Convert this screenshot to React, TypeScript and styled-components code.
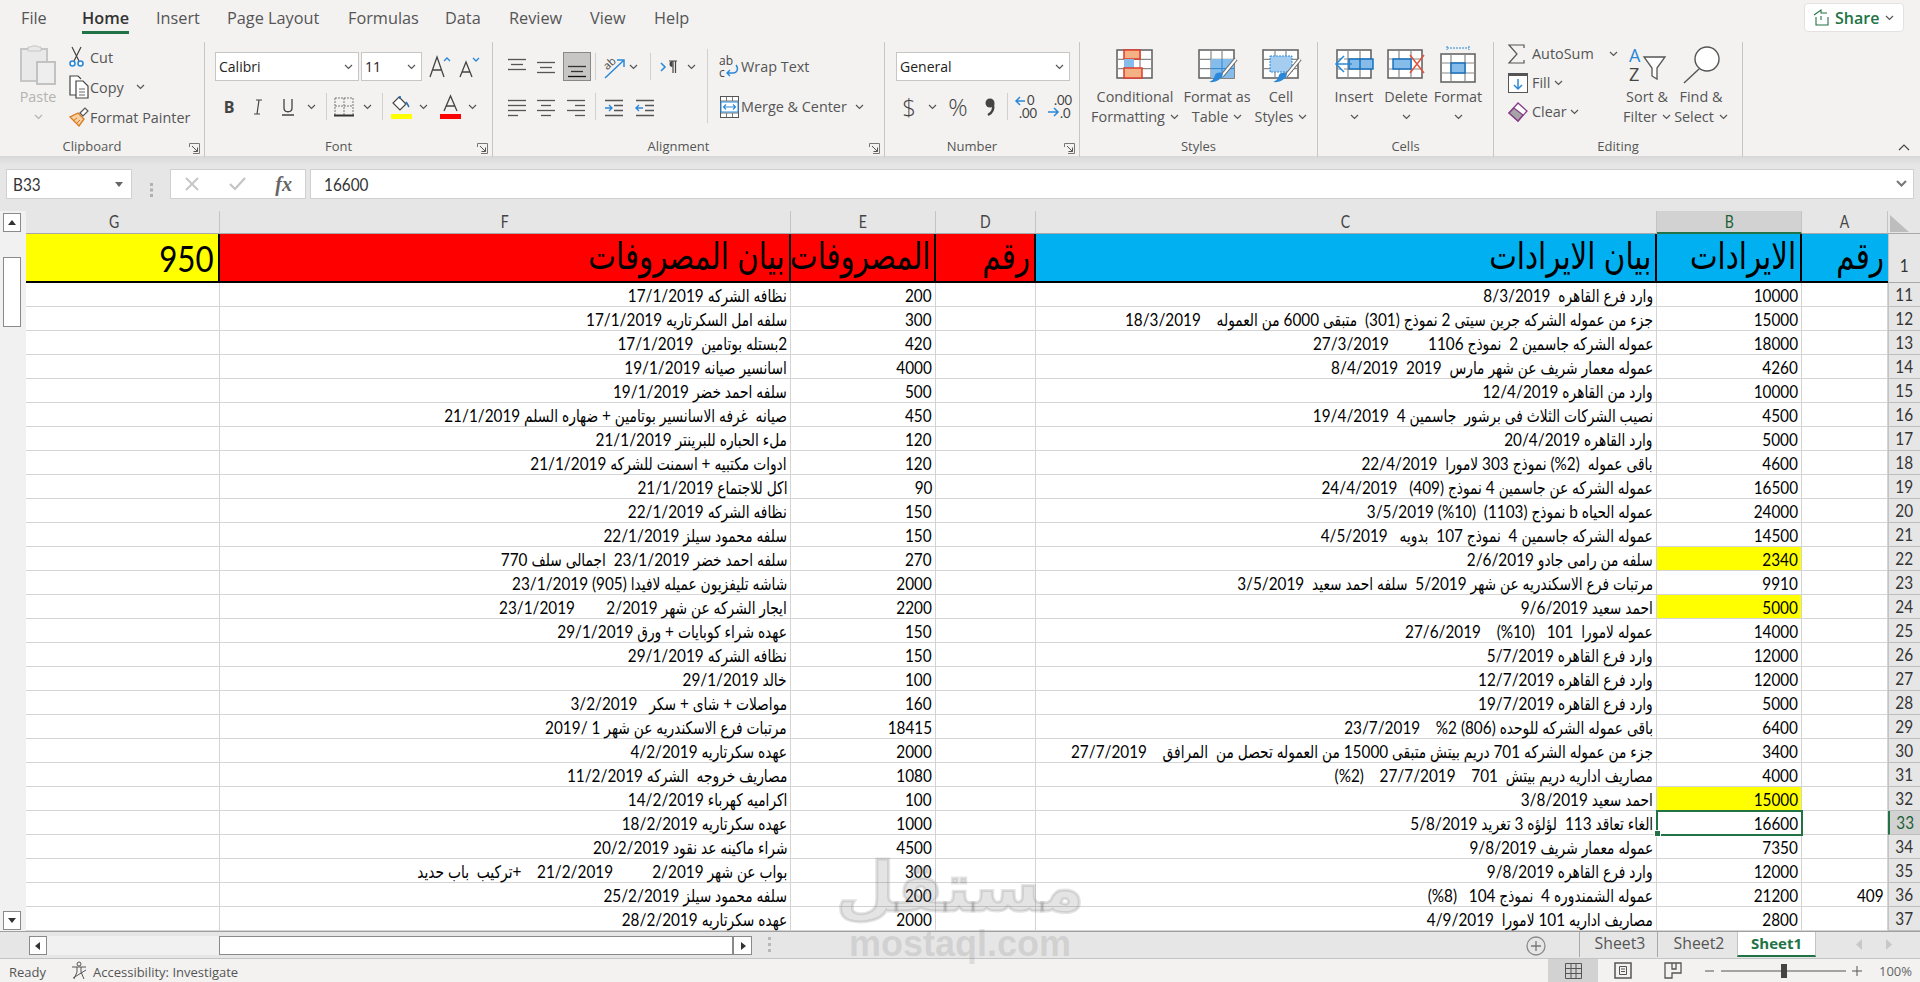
import React from 'react';
import styled, { createGlobalStyle } from 'styled-components';

const GlobalStyle = createGlobalStyle`
  html, body { margin: 0; padding: 0; background: #e6e6e6; }
  body { font-family: "Open Sans", sans-serif; overflow: hidden; }
  svg { overflow: visible; }
`;

const UI = '"Open Sans", sans-serif';
const SHEET = 'Lato, "DejaVu Sans Condensed", "DejaVu Sans", sans-serif';
const GREEN = '#217346';

const Page = styled.div`
  width: 1920px;
  height: 982px;
  display: flex;
  flex-direction: column;
  position: relative;
  overflow: hidden;
  color: #444;
`;

/* ---------- tabs ---------- */
const TabBar = styled.div`
  height: 36px;
  background: #f3f2f1;
  display: flex;
  align-items: flex-start;
  justify-content: space-between;
  padding: 0 16px 0 21px;
`;
const TabList = styled.div`
  display: flex;
`;
const Tab = styled.div<{ $w: number; $active?: boolean }>`
  width: ${p => p.$w}px;
  height: 34px;
  line-height: 36px;
  font-size: 16.3px;
  font-weight: ${p => (p.$active ? 600 : 400)};
  color: ${p => (p.$active ? '#333' : '#555')};
  white-space: nowrap;
  span {
    display: inline-block;
    height: 34px;
    border-bottom: ${p => (p.$active ? `3px solid ${GREEN}` : 'none')};
    box-sizing: border-box;
  }
`;
const ShareBtn = styled.div`
  margin-top: 3px;
  width: 100px;
  height: 29px;
  box-sizing: border-box;
  background: #fff;
  border: 1px solid #e4e2e0;
  border-radius: 4px;
  display: flex;
  align-items: center;
  padding-left: 8px;
  gap: 6px;
  color: ${GREEN};
  font-weight: 600;
  font-size: 16px;
`;

/* ---------- ribbon ---------- */
const Ribbon = styled.div`
  height: 120px;
  background: #f3f2f1;
  display: flex;
  position: relative;
  font-size: 14.4px;
`;
const Group = styled.div<{ $w: number }>`
  width: ${p => p.$w}px;
  height: 115px;
  margin-top: 6px;
  box-sizing: border-box;
  border-right: 1px solid #c8c6c4;
  display: flex;
  flex-direction: column;
  position: relative;
`;
const GroupBody = styled.div<{ $pl: number; $col?: boolean }>`
  flex: 1;
  display: flex;
  flex-direction: ${p => (p.$col ? 'column' : 'row')};
  padding-left: ${p => p.$pl}px;
  min-height: 0;
`;
const GroupLabel = styled.div<{ $launcher?: boolean }>`
  height: 20px;
  line-height: 18px;
  text-align: center;
  font-size: 13px;
  color: #555;
  padding-right: ${p => (p.$launcher ? 20 : 0)}px;
`;
const Launcher = styled.svg`
  position: absolute;
  right: 4px;
  bottom: 3px;
`;
const ToolRow = styled.div<{ $mt: number }>`
  display: flex;
  align-items: center;
  height: 29px;
  margin-top: ${p => p.$mt}px;
`;
const Tool = styled.div<{ $w: number; $ml?: number; $on?: boolean }>`
  width: ${p => p.$w}px;
  height: 29px;
  margin-left: ${p => p.$ml ?? 0}px;
  display: flex;
  align-items: center;
  justify-content: center;
  flex: none;
  box-sizing: border-box;
  ${p => (p.$on ? 'background:#c8c6c4;border:1px solid #8a8886;' : '')}
`;
const ThinSep = styled.div<{ $ml: number; $h?: number }>`
  width: 1px;
  height: ${p => p.$h ?? 27}px;
  margin-left: ${p => p.$ml}px;
  background: #d2d0ce;
  flex: none;
`;
const SelectBox = styled.div<{ $w: number; $ml?: number }>`
  width: ${p => p.$w}px;
  height: 29px;
  margin-left: ${p => p.$ml ?? 0}px;
  box-sizing: border-box;
  background: #fff;
  border: 1px solid #c8c6c4;
  display: flex;
  align-items: center;
  justify-content: space-between;
  padding: 0 5px 0 3px;
  font-size: 14px;
  color: #222;
  flex: none;
`;
const SmallCol = styled.div<{ $ml?: number; $w?: number; $mt?: number }>`
  margin-left: ${p => p.$ml ?? 0}px;
  margin-top: ${p => p.$mt ?? 0}px;
  width: ${p => (p.$w ? `${p.$w}px` : 'auto')};
  flex: none;
  display: flex;
  flex-direction: column;
`;
const SmallRow = styled.div<{ $h?: number }>`
  height: ${p => p.$h ?? 30}px;
  display: flex;
  align-items: center;
  white-space: nowrap;
  color: #555;
`;
const SmallIcon = styled.div<{ $w: number }>`
  width: ${p => p.$w}px;
  flex: none;
  display: flex;
  justify-content: flex-start;
`;
const BigBtn = styled.div<{ $w: number; $dim?: boolean }>`
  width: ${p => p.$w}px;
  flex: none;
  display: flex;
  flex-direction: column;
  align-items: center;
  color: ${p => (p.$dim ? '#b4b2b0' : '#555')};
`;
const BigIcon = styled.div`
  height: 45px;
  display: flex;
  align-items: center;
  justify-content: center;
`;
const BigLine = styled.div`
  height: 20px;
  line-height: 20px;
  display: flex;
  align-items: center;
  gap: 5px;
  white-space: nowrap;
`;
const TallSep = styled.div`
  width: 1px;
  height: 74px;
  margin: 7px 0 0 0;
  background: #d2d0ce;
  flex: none;
`;
const LetterB = styled.span`
  font: 700 16px "Open Sans", sans-serif;
  color: #444;
`;
const GlyphBig = styled.span<{ $s: number }>`
  font-family: ${UI};
  font-size: ${p => p.$s}px;
  font-weight: 300;
  color: #444;
  line-height: 1;
`;
const Collapse = styled.svg`
  position: absolute;
  right: 10px;
  bottom: 5px;
`;

/* ---------- formula bar ---------- */
const FormulaArea = styled.div`
  height: 55px;
  box-sizing: border-box;
  padding: 13px 6px 0;
  background: linear-gradient(#d8d8d8 0, #e6e6e6 9px);
  display: flex;
`;
const NameBox = styled.div`
  width: 126px;
  height: 30px;
  box-sizing: border-box;
  background: #fff;
  border: 1px solid #d0d0d0;
  display: flex;
  align-items: center;
  justify-content: space-between;
  padding: 0 8px 0 6px;
  color: #333;
`;
const BarText = styled.span`
  display: inline-block;
  font-family: ${SHEET};
  font-size: 17.6px;
  transform: scaleX(0.87);
  transform-origin: left center;
`;
const Dots = styled.div`
  width: 38px;
  display: flex;
  align-items: center;
  justify-content: center;
`;
const FxBox = styled.div`
  width: 136px;
  height: 30px;
  box-sizing: border-box;
  background: #fff;
  border: 1px solid #d0d0d0;
  display: flex;
  align-items: center;
  justify-content: space-between;
  padding: 0 13px 0 14px;
`;
const FxLabel = styled.span`
  font: italic 700 20px "Liberation Serif", serif;
  color: #666;
`;
const FormulaInput = styled.div`
  flex: 1;
  height: 30px;
  margin-left: 4px;
  box-sizing: border-box;
  background: #fff;
  border: 1px solid #d0d0d0;
  display: flex;
  align-items: center;
  justify-content: space-between;
  padding: 0 6px 0 13px;
  color: #333;
`;

/* ---------- sheet ---------- */
const SheetArea = styled.div`
  display: flex;
  height: 720px;
  background: #e6e6e6;
`;
const VScroll = styled.div`
  width: 26px;
  box-sizing: border-box;
  background: #f1f1f1;
  padding: 2px 5px 1px 3px;
  display: flex;
  flex-direction: column;
`;
const ScrollBtn = styled.div<{ $w?: number; $h?: number; $ml?: number }>`
  width: ${p => (p.$w ? `${p.$w}px` : '100%')};
  height: ${p => p.$h ?? 19}px;
  margin-left: ${p => p.$ml ?? 0}px;
  box-sizing: border-box;
  background: #fff;
  border: 1px solid #8a8a8a;
  display: flex;
  align-items: center;
  justify-content: center;
  flex: none;
`;
const VThumb = styled.div`
  height: 70px;
  margin-top: 25px;
  box-sizing: border-box;
  background: #fff;
  border: 1px solid #8a8a8a;
`;
const VSpring = styled.div`
  flex: 1;
`;
const Grid = styled.div`
  width: 1894px;
  display: grid;
  grid-template-columns: 194px 571px 145px 100px 621px 145px 86px 32px;
  grid-template-rows: 23px 49px repeat(27, 24px);
  background: #fff;
`;
const ColHead = styled.div<{ $on?: boolean; $shift?: number }>`
  box-sizing: border-box;
  background: ${p => (p.$on ? '#d2d2d2' : '#e6e6e6')};
  border-right: 1px solid #c4c4c4;
  border-bottom: ${p => (p.$on ? `2px solid ${GREEN}` : '1px solid #a8a8a8')};
  display: flex;
  align-items: center;
  justify-content: center;
  padding-right: ${p => p.$shift ?? 0}px;
  font-family: ${SHEET};
  font-size: 16.5px;
  color: ${p => (p.$on ? '#1d5e38' : '#444')};
  span {
    display: inline-block;
    transform: scaleX(0.85);
  }
`;
const Corner = styled.div`
  background: #e6e6e6;
  border-bottom: 1px solid #a8a8a8;
  box-sizing: border-box;
  padding: 4px 0 0 2px;
`;
const RowHead = styled.div<{ $on?: boolean }>`
  box-sizing: border-box;
  background: ${p => (p.$on ? '#d2d2d2' : '#e6e6e6')};
  border-bottom: 1px solid #bdbdbd;
  border-left: ${p => (p.$on ? `2px solid ${GREEN}` : '1px solid #c4c4c4')};
  display: flex;
  align-items: center;
  justify-content: center;
  color: ${p => (p.$on ? '#1d5e38' : '#333')};
  font-family: ${SHEET};
  font-size: 17.6px;
  span {
    display: inline-block;
    transform: scaleX(0.87);
  }
`;
const TitleRowHead = styled(RowHead)`
  align-items: flex-end;
  padding-bottom: 6px;
  border-bottom: 1px solid #a8a8a8;
`;
const Cell = styled.div<{ $bg?: string; $sel?: boolean }>`
  box-sizing: border-box;
  background: ${p => p.$bg ?? '#fff'};
  border-right: 1px solid #d4d4d4;
  border-bottom: 1px solid #d4d4d4;
  display: flex;
  align-items: flex-end;
  justify-content: flex-end;
  padding-right: 3px;
  font-family: ${SHEET};
  font-size: 17.6px;
  line-height: 21px;
  color: #000;
  white-space: pre;
  position: relative;
  ${p =>
    p.$sel
      ? `outline: 2px solid ${GREEN}; outline-offset: -1px; z-index: 2;
         &::after { content: ''; position: absolute; left: -3px; bottom: -3px; width: 5px; height: 5px; background: ${GREEN}; border: 1px solid #fff; }`
      : ''}
`;
const TitleCell = styled.div<{ $bg: string; $noline?: boolean }>`
  box-sizing: border-box;
  background: ${p => p.$bg};
  border-right: ${p => (p.$noline ? 'none' : '2px solid #000')};
  border-bottom: 2px solid #000;
  display: flex;
  align-items: center;
  justify-content: flex-end;
  padding-right: 4px;
  font-family: ${SHEET};
  font-size: 36px;
  color: #000;
  white-space: pre;
`;
const Squeeze = styled.span`
  display: inline-block;
  transform: scaleX(0.87);
  transform-origin: right center;
`;
const TitleText = styled(Squeeze)`
  margin-bottom: 6px;
  font-size: 37.5px;
`;

/* ---------- tab strip and status ---------- */
const SheetBar = styled.div`
  height: 28px;
  box-sizing: border-box;
  background: #e6e6e6;
  border-top: 1px solid #a0a0a0;
  border-bottom: 1px solid #c4c4c4;
  display: flex;
  align-items: flex-start;
`;
const HScroll = styled.div`
  display: flex;
  width: 723px;
  margin: 4px 0 0 29px;
  background: #f1f1f1;
`;
const HThumb = styled.div`
  width: 514px;
  height: 19px;
  margin-left: 172px;
  box-sizing: border-box;
  background: #fff;
  border: 1px solid #8a8a8a;
`;
const SheetBarFill = styled.div`
  flex: 1;
  display: flex;
  align-items: flex-start;
  padding-left: 16px;
`;
const SplitDots = styled.svg`
  margin-top: 5px;
`;
const SheetTabs = styled.div`
  margin-left: auto;
  display: flex;
  align-items: flex-start;
`;
const AddBtn = styled.div`
  margin: 4px 33px 0 0;
  width: 20px;
  height: 20px;
`;
const SheetTab = styled.div<{ $w: number; $on?: boolean }>`
  width: ${p => p.$w}px;
  height: 25px;
  box-sizing: border-box;
  line-height: 22px;
  text-align: center;
  padding-left: ${p => (p.$on ? 0 : 3)}px;
  font-size: ${p => (p.$on ? 15 : 15.8)}px;
  color: ${p => (p.$on ? GREEN : '#555')};
  font-weight: ${p => (p.$on ? 700 : 400)};
  background: ${p => (p.$on ? '#fff' : 'transparent')};
  border-left: 1px solid ${p => (p.$on ? '#c4c4c4' : '#a8a8a8')};
  border-bottom: ${p => (p.$on ? `2px solid ${GREEN}` : 'none')};
  ${p => (p.$on ? 'border-right: 1px solid #c4c4c4;' : '')}
`;
const TabArrows = styled.div`
  width: 104px;
  display: flex;
  align-items: center;
  gap: 22px;
  height: 25px;
  padding-left: 40px;
  box-sizing: border-box;
`;
const StatusBar = styled.div`
  height: 23px;
  background: #f3f2f1;
  display: flex;
  align-items: center;
  padding-left: 9px;
  font-size: 13px;
  color: #555;
`;
const StatusText = styled.span`
  margin-top: 3px;
`;
const StatusIcon = styled.div`
  margin-left: 25px;
  margin-right: 4px;
  display: flex;
`;
const ViewBtns = styled.div`
  margin-left: auto;
  display: flex;
  height: 23px;
`;
const ViewBtn = styled.div<{ $on?: boolean }>`
  width: 50px;
  display: flex;
  align-items: center;
  justify-content: center;
  background: ${p => (p.$on ? '#d2d2d2' : 'transparent')};
`;
const ZoomBar = styled.div`
  width: 222px;
  box-sizing: border-box;
  display: flex;
  align-items: center;
  padding-left: 7px;
  flex: none;
`;
const ZoomLabel = styled.span`
  margin-left: 16px;
  font-size: 13px;
  color: #666;
`;

/* ---------- watermark ---------- */
const Watermark = styled.div`
  position: absolute;
  left: 830px;
  top: 848px;
  width: 260px;
  text-align: center;
  color: rgba(120, 120, 120, 0.2);
  pointer-events: none;
  z-index: 5;
  line-height: 1;
`;
const WatermarkAr = styled.div`
  font: 700 68px "DejaVu Sans", sans-serif;
  -webkit-text-stroke: 3px rgba(120, 120, 120, 0.2);
  height: 75px;
`;
const WatermarkEn = styled.div`
  font: 700 36px "Liberation Sans", sans-serif;
`;

/* ---------- icons ---------- */
const Chev = ({ c = '#555' }: { c?: string }) => (
  <svg width="9" height="6" viewBox="0 0 9 6">
    <path d="M1 1l3.5 3.5L8 1" fill="none" stroke={c} strokeWidth="1.2" />
  </svg>
);
const LauncherIcon = () => (
  <Launcher width="11" height="11" viewBox="0 0 11 11">
    <path d="M.5 4V.5h10v10H4" fill="none" stroke="#777" />
    <path d="M3 3l5.500 5.500M8.500 4.500v4h-4" fill="none" stroke="#555" />
  </Launcher>
);
const PasteIcon = () => (
  <svg width="36" height="40" viewBox="0 0 36 40">
    <rect x="1" y="4" width="26" height="32" fill="#e9e9e9" stroke="#c6c6c6" strokeWidth="2" />
    <path d="M8 5V2h3l1-1h5l1 1h3v4H8z" fill="#e9e9e9" stroke="#c6c6c6" />
    <rect x="17" y="17" width="18" height="22" fill="#eee" stroke="#c2c2c2" strokeWidth="2" />
  </svg>
);
const CutIcon = () => (
  <svg width="15" height="20" viewBox="0 0 15 20">
    <path d="M3 0l7 14M12 0L5 14" stroke="#444" strokeWidth="1.2" fill="none" />
    <circle cx="3.500" cy="16.500" r="2.500" fill="#fff" stroke="#2b88d8" strokeWidth="1.6" />
    <circle cx="11.500" cy="16.500" r="2.500" fill="#fff" stroke="#2b88d8" strokeWidth="1.6" />
  </svg>
);
const CopyIcon = () => (
  <svg width="21" height="24" viewBox="0 0 21 24">
    <path d="M7 20H1V1h8l3 3" fill="#fff" stroke="#444" strokeWidth="1.2" />
    <path d="M7 6h7l5 5v12H7z" fill="#fff" stroke="#444" strokeWidth="1.2" />
    <path d="M10 14h6M10 17h6M10 20h6" stroke="#666" />
  </svg>
);
const PainterIcon = () => (
  <svg width="20" height="20" viewBox="0 0 20 20">
    <path d="M9 6l6 6-5 7-9-9z" fill="#f8cfa0" stroke="#d87a1e" strokeWidth="1.3" />
    <path d="M4 14l4-3M7 17l4-4" stroke="#d87a1e" />
    <path d="M11 6l5-5 3 3-5 5z" fill="#fff" stroke="#555" strokeWidth="1.2" />
  </svg>
);
const Underline = () => (
  <svg width="14" height="20" viewBox="0 0 14 20">
    <path d="M3 2v9c0 5 8 5 8 0V2M1 18h12" stroke="#444" strokeWidth="1.3" fill="none" />
  </svg>
);
const Italic = () => (
  <svg width="10" height="16" viewBox="0 0 10 16">
    <path d="M3 1h6M1 15h6M6 1L4 15" stroke="#444" strokeWidth="1.2" fill="none" />
  </svg>
);
const BorderIcon = () => (
  <svg width="20" height="20" viewBox="0 0 20 20">
    <path d="M1 1h18M1 1v17M19 1v17M10 1v17M1 9h18" stroke="#777" strokeDasharray="2 1" fill="none" />
    <path d="M0 18.500h20" stroke="#333" strokeWidth="2" />
  </svg>
);
const FillIcon = () => (
  <svg width="21" height="24" viewBox="0 0 21 24">
    <path d="M8 2l7 7-6 6-7-7z" fill="#fff" stroke="#444" strokeWidth="1.2" />
    <path d="M9 4V1M15 7c2 2 2 4 3 5" stroke="#1f6fb5" strokeWidth="1.6" fill="none" />
    <rect x="0" y="19" width="21" height="5" fill="#ffff00" />
  </svg>
);
const ColorA = () => (
  <svg width="21" height="24" viewBox="0 0 21 24">
    <path d="M4 16L10.500 1 17 16M6.500 11h8" stroke="#444" strokeWidth="1.3" fill="none" />
    <rect x="0" y="19" width="21" height="5" fill="#ff0000" />
  </svg>
);
const GrowA = ({ up }: { up: boolean }) => (
  <svg width="22" height="24" viewBox="0 0 22 24">
    {up ? (
      <>
        <path d="M1 22L8 2l7 20M4 15h8" stroke="#444" strokeWidth="1.3" fill="none" />
        <path d="M15 6l3-3 3 3" stroke="#2b88d8" strokeWidth="1.4" fill="none" />
      </>
    ) : (
      <>
        <path d="M2 22L8 7l6 15M4.500 17h7" stroke="#444" strokeWidth="1.3" fill="none" />
        <path d="M15 3l3 3 3-3" stroke="#2b88d8" strokeWidth="1.4" fill="none" />
      </>
    )}
  </svg>
);
const Lines = ({ rows: lines }: { rows: [number, number, number, string?][] }) => (
  <svg width="20" height="24" viewBox="0 0 20 24">
    {lines.map(([x1, x2, y, c], i) => (
      <path key={i} d={`M${x1} ${y + 0.5}H${x2}`} stroke={c ?? '#555'} strokeWidth="1.3" />
    ))}
  </svg>
);
const Indent = ({ back }: { back?: boolean }) => (
  <svg width="20" height="24" viewBox="0 0 20 24">
    <path d="M1 5.500h18M10 10.500h9M10 15.500h9M1 20.500h18" stroke="#555" strokeWidth="1.3" />
    <path
      d={back ? 'M8 13H1m3-3l-3 3 3 3' : 'M1 13h7m-3-3l3 3-3 3'}
      stroke="#2b88d8"
      strokeWidth="1.4"
      fill="none"
    />
  </svg>
);
const Orient = () => (
  <svg width="22" height="24" viewBox="0 0 22 24">
    <path d="M2 23L20 6M14 5h7v7" stroke="#2b88d8" strokeWidth="1.5" fill="none" />
    <text x="1" y="13" fontSize="11" fontFamily="Open Sans" fill="#444" transform="rotate(-42 6 10)">ab</text>
  </svg>
);
const Rtl = () => (
  <svg width="18" height="14" viewBox="0 0 18 14">
    <path d="M1 3l4 4-4 4" stroke="#2b88d8" strokeWidth="1.6" fill="none" />
    <path d="M9 1h8M13 1v12M15.500 1v12" stroke="#444" strokeWidth="1.2" fill="none" />
    <path d="M12.500 1a3 3 0 0 0 0 6z" fill="#444" />
  </svg>
);
const WrapIcon = () => (
  <svg width="20" height="24" viewBox="0 0 20 24">
    <text x="0" y="10" fontSize="12" fontFamily="Open Sans" fill="#444">ab</text>
    <text x="0" y="22" fontSize="12" fontFamily="Open Sans" fill="#444">c</text>
    <path d="M17 10c3 4 1 8-3 8H8m3-3l-3 3 3 3" stroke="#2b88d8" strokeWidth="1.4" fill="none" />
  </svg>
);
const MergeIcon = () => (
  <svg width="19" height="24" viewBox="0 0 19 24">
    <rect x="0.500" y="1.500" width="18" height="21" fill="#fff" stroke="#555" />
    <path d="M1 6h17M1 18h17M6.500 2v4M12.500 2v4M6.500 18v4M12.500 18v4" stroke="#777" />
    <rect x="1" y="7" width="17" height="10" fill="#fff" stroke="#2b88d8" />
    <path d="M4 12h11M6 9.500L3.500 12 6 14.500M13 9.500l2.500 2.500L13 14.500" stroke="#2b88d8" strokeWidth="1.1" fill="none" />
  </svg>
);
const CommaIcon = () => (
  <svg width="10" height="18" viewBox="0 0 10 18">
    <circle cx="5" cy="5" r="4.500" fill="#444" />
    <path d="M8 6c1 5-1 9-5 11" stroke="#444" strokeWidth="2.400" fill="none" />
  </svg>
);
const DecIcon = ({ more }: { more: boolean }) => (
  <svg width="22" height="26" viewBox="0 0 22 26">
    <path d={more ? 'M10 7H1m4-4L1 7l4 4' : 'M0 18h10m-4-4l4 4-4 4'} stroke="#2b88d8" strokeWidth="1.5" fill="none" />
    <text x={more ? 12 : 6} y="11" fontSize="13" fontFamily="Lato" fill="#444">{more ? '0' : '.00'}</text>
    <text x={more ? 4 : 12} y="24" fontSize="13" fontFamily="Lato" fill="#444">{more ? '.00' : '.0'}</text>
  </svg>
);
const TableBase = ({ children }: { children?: React.ReactNode }) => (
  <svg width="40" height="36" viewBox="0 0 40 36">
    <rect x="2" y="3" width="35" height="28" fill="#fff" stroke="#666" strokeWidth="1.6" />
    <path d="M14 3v28M25 3v28M2 12.300h35M2 21.600h35" stroke="#888" strokeWidth="1.2" />
    {children}
  </svg>
);
const Brush = () => (
  <>
    <path d="M39 12L25 29" stroke="#666" strokeWidth="4" />
    <path d="M39 12L25 29" stroke="#fff" strokeWidth="2" />
    <path d="M26 27c-1 5-7 9-14 8 3-1 5-3 6-7 2-3 6-3 8-1z" fill="#2b88d8" />
  </>
);
const CondIcon = () => (
  <TableBase>
    <rect x="9" y="3" width="16" height="9" fill="#f4b183" stroke="#e03b2e" strokeWidth="1.5" />
    <rect x="9" y="12" width="10" height="9" fill="#85bcea" />
    <rect x="9" y="21" width="18" height="10" fill="#f4b183" stroke="#e03b2e" strokeWidth="1.5" />
  </TableBase>
);
const FormatTableIcon = () => (
  <TableBase>
    <rect x="14" y="12" width="23" height="19" fill="#85bcea" />
    <path d="M25 12v19M14 21.600h23" stroke="#2b88d8" />
    <Brush />
  </TableBase>
);
const CellStylesIcon = () => (
  <TableBase>
    <rect x="9" y="9" width="22" height="16" fill="#a5cdf0" stroke="#2b88d8" strokeDasharray="2 1" />
    <Brush />
  </TableBase>
);
const InsertIcon = () => (
  <svg width="40" height="36" viewBox="0 0 40 36">
    <rect x="3" y="3" width="34" height="28" fill="#fff" stroke="#666" strokeWidth="1.6" />
    <path d="M14 3v28M26 3v28M3 12h34M3 22h34" stroke="#888" strokeWidth="1.2" />
    <rect x="15" y="12" width="24" height="10" fill="#85bcea" stroke="#0f6cbd" strokeWidth="1.4" />
    <path d="M26 12v10" stroke="#0f6cbd" strokeWidth="1.4" />
    <path d="M2 17h16M10 9l-8 8 8 8" stroke="#2b88d8" strokeWidth="1.6" fill="#fff" />
  </svg>
);
const DeleteIcon = () => (
  <svg width="40" height="36" viewBox="0 0 40 36">
    <rect x="2" y="3" width="34" height="28" fill="#fff" stroke="#666" strokeWidth="1.6" />
    <path d="M13 3v28M25 3v28M2 12h34M2 22h34" stroke="#888" strokeWidth="1.2" />
    <rect x="7" y="12" width="18" height="10" fill="#85bcea" stroke="#0f6cbd" strokeWidth="1.4" />
    <path d="M24 8l14 18M38 8L24 26" stroke="#e0533d" strokeWidth="1.5" />
  </svg>
);
const FormatIcon = () => (
  <svg width="38" height="40" viewBox="0 0 38 40">
    <path d="M8 3h22M8 1v4M30 1v4" stroke="#2b88d8" strokeDasharray="2 1" />
    <rect x="2" y="9" width="34" height="28" fill="#fff" stroke="#666" strokeWidth="1.6" />
    <path d="M12 9v28M26 9v28M2 18h34M2 28h34" stroke="#888" strokeWidth="1.2" />
    <rect x="12" y="18" width="14" height="10" fill="#85bcea" stroke="#0f6cbd" strokeWidth="1.4" />
  </svg>
);
const SumIcon = () => (
  <svg width="17" height="20" viewBox="0 0 17 20">
    <path d="M16 4V1H1l8 9-8 9h15v-3" fill="none" stroke="#555" strokeWidth="1.2" />
  </svg>
);
const FillDown = () => (
  <svg width="20" height="20" viewBox="0 0 20 20">
    <rect x="0.500" y="0.500" width="19" height="19" fill="#fff" stroke="#555" />
    <rect x="0" y="0" width="20" height="3" fill="#555" />
    <path d="M10 6v10M6 12l4 4 4-4" stroke="#2b88d8" strokeWidth="1.5" fill="none" />
  </svg>
);
const Eraser = () => (
  <svg width="20" height="22" viewBox="0 0 20 22">
    <path d="M1 12l9-10 9 8-9 10z" fill="#fff" stroke="#8a3c8a" strokeWidth="1.3" />
    <path d="M1 12l5-5 9 7-5 6z" fill="#a5a5a5" stroke="#8a3c8a" strokeWidth="1.3" />
  </svg>
);
const SortIcon = () => (
  <svg width="38" height="36" viewBox="0 0 38 36">
    <text x="1" y="15" fontSize="18" fontFamily="Open Sans" fill="#2b88d8">A</text>
    <text x="1" y="34" fontSize="18" fontFamily="Open Sans" fill="#444">Z</text>
    <path d="M16 10h21l-8 11v11l-5-3v-8z" fill="#fff" stroke="#555" strokeWidth="1.3" />
  </svg>
);
const FindIcon = () => (
  <svg width="38" height="38" viewBox="0 0 38 38">
    <circle cx="25" cy="13" r="12" fill="#fff" stroke="#555" strokeWidth="1.4" />
    <path d="M17 23L2 37" stroke="#555" strokeWidth="1.4" />
  </svg>
);
const ShareIcon = () => (
  <svg width="16" height="17" viewBox="0 0 16 17">
    <path d="M3 8v8h12V8M1 6l7-5v3h6M8 11V7" fill="none" stroke={GREEN} strokeWidth="1.1" />
  </svg>
);
const Triangle = ({ dir }: { dir: 'u' | 'd' | 'l' | 'r' }) => {
  const d = { u: 'M1 7l4-5 4 5z', d: 'M1 2l4 5 4-5z', l: 'M7 1L2 5l5 4z', r: 'M3 1l5 4-5 4z' }[dir];
  return (
    <svg width="10" height="10" viewBox="0 0 10 10">
      <path d={d} fill="#333" />
    </svg>
  );
};

/* ---------- data ---------- */
const rows: [number, string, string, string, string, string][] = [
  [11, '', '10000', 'وارد فرع القاهره  8/3/2019', '200', 'نظافه الشركه 17/1/2019'],
  [12, '', '15000', 'جزء من عموله الشركه جرين سيتى 2 نموذج (301)  متبقى 6000 من العموله    18/3/2019', '300', 'سلفه امل السكرتاريه 17/1/2019'],
  [13, '', '18000', 'عموله الشركه جاسمين 2  نموذج 1106          27/3/2019', '420', '2بستله بوتامين  17/1/2019'],
  [14, '', '4260', 'عموله معمار شريف عن شهر مارس  2019  8/4/2019', '4000', 'اسانسير صيانه 19/1/2019'],
  [15, '', '10000', 'وارد من القاهره 12/4/2019', '500', 'سلفه احمد خضر 19/1/2019'],
  [16, '', '4500', 'نصيب الشركات الثلاث فى برشور  جاسمين 4  19/4/2019', '450', 'صيانه  غرفه الاسانسير بوتامين + ضهاره السلم 21/1/2019'],
  [17, '', '5000', 'وارد القاهره 20/4/2019', '120', 'ملء الحباره للبرينتر 21/1/2019'],
  [18, '', '4600', 'باقى عموله  (2%) نموذج 303 لامورا  22/4/2019', '120', 'ادوات مكتبيه + اسمنت للشركه 21/1/2019'],
  [19, '', '16500', 'عموله الشركه عن جاسمين 4 نموذج (409)   24/4/2019', '90', 'اكل للاجتماع 21/1/2019'],
  [20, '', '24000', 'عموله الحياه b نموذج (1103)  (10%) 3/5/2019', '150', 'نظافه الشركه 22/1/2019'],
  [21, '', '14500', 'عموله الشركه جاسمين 4  نموذج 107  بدويه   4/5/2019', '150', 'سلفه محمود سيلز 22/1/2019'],
  [22, '', '2340', 'سلفه من رامى جادو 2/6/2019', '270', 'سلفه احمد خضر 23/1/2019  اجمالى سلف 770'],
  [23, '', '9910', 'مرتبات فرع الاسكندريه عن شهر 5/2019  سلفه احمد سعيد  3/5/2019', '2000', 'شاشه تليفزيون عميله لافيدا (905) 23/1/2019'],
  [24, '', '5000', 'احمد سعيد 9/6/2019', '2200', 'ايجار الشركه عن شهر 2/2019        23/1/2019'],
  [25, '', '14000', 'عموله لامورا  101   (10%)    27/6/2019', '150', 'عهده شراء كوبايات + ورق 29/1/2019'],
  [26, '', '12000', 'وارد فرع القاهره 5/7/2019', '150', 'نظافه الشركه 29/1/2019'],
  [27, '', '12000', 'وارد فرع القاهره 12/7/2019', '100', 'خالد 29/1/2019'],
  [28, '', '5000', 'وارد فرع القاهره 19/7/2019', '160', 'مواصلات + شاى + سكر   3/2/2019'],
  [29, '', '6400', 'باقى عموله الشركه للوحده (806) 2%    23/7/2019', '18415', 'مرتبات فرع الاسكندريه عن شهر 1 /2019'],
  [30, '', '3400', 'جزء من عموله الشركه 701 دريم بيتش متبقى 15000 من العموله تحصل من  المرافق    27/7/2019', '2000', 'عهده سكرتاريه 4/2/2019'],
  [31, '', '4000', 'مصاريف اداريه دريم بيتش  701    27/7/2019    (2%)', '1080', 'مصاريف خروجه  الشركه 11/2/2019'],
  [32, '', '15000', 'احمد سعيد 3/8/2019', '100', 'اكراميه كهرباء 14/2/2019'],
  [33, '', '16600', 'الغاء تعاقد 113  لؤلؤه 3 تغريد 5/8/2019', '1000', 'عهده سكرتاريه 18/2/2019'],
  [34, '', '7350', 'عموله معمار شريف 9/8/2019', '4500', 'شراء ماكينه عد نقود 20/2/2019'],
  [35, '', '12000', 'وارد فرع القاهره 9/8/2019', '300', 'بواب عن شهر 2/2019          21/2/2019    +تركيب  باب حديد'],
  [36, '409', '21200', 'عموله الشمندوره 4  نموذج 104   (8%)', '200', 'سلفه محمود سيلز 25/2/2019'],
  [37, '', '2800', 'مصاريف اداريه 101 لامورا  4/9/2019', '2000', 'عهده سكرتاريه 28/2/2019'],
];
const yellowRows = [22, 24, 32];

const tabs: [string, number, boolean?][] = [
  ['File', 61],
  ['Home', 74, true],
  ['Insert', 71],
  ['Page Layout', 121],
  ['Formulas', 97],
  ['Data', 64],
  ['Review', 81],
  ['View', 64],
  ['Help', 60],
];

const T = ({ children }: { children: string }) => <Squeeze dir="rtl">{children}</Squeeze>;
const Title = ({ children }: { children: string }) => <TitleText dir="rtl">{children}</TitleText>;

const App: React.FC = () => (
  <Page>
    <GlobalStyle />
    <TabBar>
      <TabList>
        {tabs.map(([name, w, active]) => (
          <Tab key={name} $w={w} $active={active}>
            <span>{name}</span>
          </Tab>
        ))}
      </TabList>
      <ShareBtn>
        <ShareIcon />
        <span>Share</span>
        <Chev />
      </ShareBtn>
    </TabBar>

    <Ribbon>
      <Group $w={205}>
        <GroupBody $pl={18}>
          <BigBtn $w={40} $dim>
            <BigIcon><PasteIcon /></BigIcon>
            <BigLine>Paste</BigLine>
            <BigLine><Chev c="#b4b2b0" /></BigLine>
          </BigBtn>
          <SmallCol $ml={11}>
            <SmallRow><SmallIcon $w={21}><CutIcon /></SmallIcon>Cut</SmallRow>
            <SmallRow><SmallIcon $w={21}><CopyIcon /></SmallIcon>Copy<Tool $w={34}><Chev /></Tool></SmallRow>
            <SmallRow><SmallIcon $w={21}><PainterIcon /></SmallIcon>Format Painter</SmallRow>
          </SmallCol>
        </GroupBody>
        <GroupLabel $launcher>Clipboard</GroupLabel>
        <LauncherIcon />
      </Group>

      <Group $w={288}>
        <GroupBody $pl={10} $col>
          <ToolRow $mt={10}>
            <SelectBox $w={144}>Calibri<Chev /></SelectBox>
            <SelectBox $w={61} $ml={2}>11<Chev /></SelectBox>
            <Tool $w={26} $ml={5}><GrowA up /></Tool>
            <Tool $w={24} $ml={4}><GrowA up={false} /></Tool>
          </ToolRow>
          <ToolRow $mt={11}>
            <Tool $w={28}><LetterB>B</LetterB></Tool>
            <Tool $w={30}><Italic /></Tool>
            <Tool $w={30}><Underline /></Tool>
            <Tool $w={16}><Chev /></Tool>
            <ThinSep $ml={7} />
            <Tool $w={30} $ml={2}><BorderIcon /></Tool>
            <Tool $w={16}><Chev /></Tool>
            <ThinSep $ml={7} />
            <Tool $w={30} $ml={3}><FillIcon /></Tool>
            <Tool $w={14}><Chev /></Tool>
            <Tool $w={30} $ml={5}><ColorA /></Tool>
            <Tool $w={14}><Chev /></Tool>
          </ToolRow>
        </GroupBody>
        <GroupLabel $launcher>Font</GroupLabel>
        <LauncherIcon />
      </Group>

      <Group $w={392}>
        <GroupBody $pl={10}>
          <SmallCol $w={204}>
            <ToolRow $mt={10}>
              <Tool $w={28}><Lines rows={[[1, 19, 4], [4, 16, 9], [1, 19, 14]]} /></Tool>
              <Tool $w={30}><Lines rows={[[1, 19, 7], [4, 16, 12], [1, 19, 17]]} /></Tool>
              <Tool $w={28} $ml={2} $on><Lines rows={[[1, 19, 11, '#333'], [4, 16, 16, '#333'], [1, 19, 21, '#111']]} /></Tool>
              <ThinSep $ml={4} />
              <Tool $w={28} $ml={4}><Orient /></Tool>
              <Tool $w={10}><Chev /></Tool>
              <ThinSep $ml={12} />
              <Tool $w={28} $ml={4}><Rtl /></Tool>
              <Tool $w={14} $ml={1}><Chev /></Tool>
            </ToolRow>
            <ToolRow $mt={11}>
              <Tool $w={28}><Lines rows={[[1, 19, 5], [1, 19, 10], [1, 19, 15], [1, 11, 20]]} /></Tool>
              <Tool $w={30}><Lines rows={[[1, 19, 5], [5, 15, 10], [1, 19, 15], [5, 15, 20]]} /></Tool>
              <Tool $w={30}><Lines rows={[[1, 19, 5], [9, 19, 10], [1, 19, 15], [9, 19, 20]]} /></Tool>
              <ThinSep $ml={4} />
              <Tool $w={28} $ml={4}><Indent /></Tool>
              <Tool $w={30} $ml={2}><Indent back /></Tool>
            </ToolRow>
          </SmallCol>
          <TallSep />
          <SmallCol $ml={9}>
            <ToolRow $mt={10}>
              <Tool $w={24}><WrapIcon /></Tool>
              <SmallRow $h={29}>Wrap Text</SmallRow>
            </ToolRow>
            <ToolRow $mt={11}>
              <Tool $w={24}><MergeIcon /></Tool>
              <SmallRow $h={29}>Merge &amp; Center<Tool $w={26}><Chev /></Tool></SmallRow>
            </ToolRow>
          </SmallCol>
        </GroupBody>
        <GroupLabel $launcher>Alignment</GroupLabel>
        <LauncherIcon />
      </Group>

      <Group $w={195}>
        <GroupBody $pl={11} $col>
          <ToolRow $mt={10}>
            <SelectBox $w={174}>General<Chev /></SelectBox>
          </ToolRow>
          <ToolRow $mt={11}>
            <Tool $w={26}><GlyphBig $s={24}>$</GlyphBig></Tool>
            <Tool $w={20}><Chev /></Tool>
            <Tool $w={32}><GlyphBig $s={24}>%</GlyphBig></Tool>
            <Tool $w={32}><CommaIcon /></Tool>
            <ThinSep $ml={1} />
            <Tool $w={36}><DecIcon more /></Tool>
            <Tool $w={30}><DecIcon more={false} /></Tool>
          </ToolRow>
        </GroupBody>
        <GroupLabel $launcher>Number</GroupLabel>
        <LauncherIcon />
      </Group>

      <Group $w={238}>
        <GroupBody $pl={14}>
          <BigBtn $w={82}>
            <BigIcon><CondIcon /></BigIcon>
            <BigLine>Conditional</BigLine>
            <BigLine>Formatting<Chev /></BigLine>
          </BigBtn>
          <BigBtn $w={82}>
            <BigIcon><FormatTableIcon /></BigIcon>
            <BigLine>Format as</BigLine>
            <BigLine>Table<Chev /></BigLine>
          </BigBtn>
          <BigBtn $w={46}>
            <BigIcon><CellStylesIcon /></BigIcon>
            <BigLine>Cell</BigLine>
            <BigLine>Styles<Chev /></BigLine>
          </BigBtn>
        </GroupBody>
        <GroupLabel>Styles</GroupLabel>
      </Group>

      <Group $w={176}>
        <GroupBody $pl={10}>
          <BigBtn $w={52}>
            <BigIcon><InsertIcon /></BigIcon>
            <BigLine>Insert</BigLine>
            <BigLine><Chev /></BigLine>
          </BigBtn>
          <BigBtn $w={52}>
            <BigIcon><DeleteIcon /></BigIcon>
            <BigLine>Delete</BigLine>
            <BigLine><Chev /></BigLine>
          </BigBtn>
          <BigBtn $w={52}>
            <BigIcon><FormatIcon /></BigIcon>
            <BigLine>Format</BigLine>
            <BigLine><Chev /></BigLine>
          </BigBtn>
        </GroupBody>
        <GroupLabel>Cells</GroupLabel>
      </Group>

      <Group $w={249}>
        <GroupBody $pl={14}>
          <SmallCol $w={112} $mt={-3}>
            <SmallRow $h={29}><SmallIcon $w={24}><SumIcon /></SmallIcon>AutoSum<Tool $w={28} $ml={6}><Chev /></Tool></SmallRow>
            <SmallRow $h={29}><SmallIcon $w={24}><FillDown /></SmallIcon>Fill<Tool $w={16}><Chev /></Tool></SmallRow>
            <SmallRow $h={29}><SmallIcon $w={24}><Eraser /></SmallIcon>Clear<Tool $w={16}><Chev /></Tool></SmallRow>
          </SmallCol>
          <BigBtn $w={54}>
            <BigIcon><SortIcon /></BigIcon>
            <BigLine>Sort &amp;</BigLine>
            <BigLine>Filter<Chev /></BigLine>
          </BigBtn>
          <BigBtn $w={54}>
            <BigIcon><FindIcon /></BigIcon>
            <BigLine>Find &amp;</BigLine>
            <BigLine>Select<Chev /></BigLine>
          </BigBtn>
        </GroupBody>
        <GroupLabel>Editing</GroupLabel>
      </Group>

      <Collapse width="12" height="8" viewBox="0 0 12 8">
        <path d="M1 7l5-5 5 5" fill="none" stroke="#444" strokeWidth="1.2" />
      </Collapse>
    </Ribbon>

    <FormulaArea>
      <NameBox>
        <BarText>B33</BarText>
        <svg width="8" height="5" viewBox="0 0 8 5"><path d="M0 0h8L4 5z" fill="#666" /></svg>
      </NameBox>
      <Dots>
        <svg width="3" height="14" viewBox="0 0 3 14">
          <path d="M0 0h3v3H0zM0 5.500h3v3H0zM0 11h3v3H0z" fill="#b0b0b0" />
        </svg>
      </Dots>
      <FxBox>
        <svg width="14" height="14" viewBox="0 0 14 14"><path d="M1 1l12 12M13 1L1 13" stroke="#c4c4c4" strokeWidth="1.8" /></svg>
        <svg width="17" height="14" viewBox="0 0 17 14"><path d="M1 7l5 5L16 1" stroke="#c4c4c4" strokeWidth="2.2" fill="none" /></svg>
        <FxLabel>fx</FxLabel>
      </FxBox>
      <FormulaInput>
        <BarText>16600</BarText>
        <svg width="11" height="8" viewBox="0 0 11 8"><path d="M1 1l4.500 4.500L10 1" fill="none" stroke="#777" strokeWidth="2" /></svg>
      </FormulaInput>
    </FormulaArea>

    <SheetArea>
      <VScroll>
        <ScrollBtn><Triangle dir="u" /></ScrollBtn>
        <VThumb />
        <VSpring />
        <ScrollBtn><Triangle dir="d" /></ScrollBtn>
      </VScroll>
      <Grid>
        {['G', 'F', 'E', 'D', 'C', 'B', 'A'].map(c => (
          <ColHead key={c} $on={c === 'B'} $shift={c === 'G' ? 16 : 0}><span>{c}</span></ColHead>
        ))}
        <Corner>
          <svg width="19" height="17" viewBox="0 0 19 17"><path d="M0 0v17h19z" fill="#bdbdbd" /></svg>
        </Corner>

        <TitleCell $bg="#ffff00"><Squeeze>950</Squeeze></TitleCell>
        <TitleCell $bg="#ff0000"><Title>بيان المصروفات</Title></TitleCell>
        <TitleCell $bg="#ff0000"><Title>المصروفات</Title></TitleCell>
        <TitleCell $bg="#ff0000"><Title>رقم</Title></TitleCell>
        <TitleCell $bg="#00b0f0"><Title>بيان الايرادات</Title></TitleCell>
        <TitleCell $bg="#00b0f0"><Title>الايرادات</Title></TitleCell>
        <TitleCell $bg="#00b0f0" $noline><Title>رقم</Title></TitleCell>
        <TitleRowHead><span>1</span></TitleRowHead>

        {rows.map(([n, a, b, c, e, f]) => (
          <React.Fragment key={n}>
            <Cell />
            <Cell><T>{f}</T></Cell>
            <Cell><Squeeze>{e}</Squeeze></Cell>
            <Cell />
            <Cell><T>{c}</T></Cell>
            <Cell $bg={yellowRows.includes(n) ? '#ffff00' : undefined} $sel={n === 33}><Squeeze>{b}</Squeeze></Cell>
            <Cell><Squeeze>{a}</Squeeze></Cell>
            <RowHead $on={n === 33}><span>{n}</span></RowHead>
          </React.Fragment>
        ))}
      </Grid>
    </SheetArea>

    <SheetBar>
      <HScroll>
        <ScrollBtn $w={18}><Triangle dir="l" /></ScrollBtn>
        <HThumb />
        <ScrollBtn $w={19}><Triangle dir="r" /></ScrollBtn>
      </HScroll>
      <SheetBarFill>
        <SplitDots width="3" height="16" viewBox="0 0 3 16">
          <path d="M0 0h3v3H0zM0 6h3v3H0zM0 12h3v3H0z" fill="#b8b8b8" />
        </SplitDots>
        <SheetTabs>
          <AddBtn>
            <svg width="20" height="20" viewBox="0 0 20 20">
              <circle cx="10" cy="10" r="9" fill="none" stroke="#8a8a8a" strokeWidth="1.3" />
              <path d="M10 5v10M5 10h10" stroke="#777" strokeWidth="1.3" />
            </svg>
          </AddBtn>
          <SheetTab $w={78}>Sheet3</SheetTab>
          <SheetTab $w={80}>Sheet2</SheetTab>
          <SheetTab $w={79} $on>Sheet1</SheetTab>
          <TabArrows>
            <svg width="7" height="11" viewBox="0 0 7 11"><path d="M6 0v11L0 5.500z" fill="#c8c8c8" /></svg>
            <svg width="7" height="11" viewBox="0 0 7 11"><path d="M1 0v11l6-5.500z" fill="#c8c8c8" /></svg>
          </TabArrows>
        </SheetTabs>
      </SheetBarFill>
    </SheetBar>

    <StatusBar>
      <StatusText>Ready</StatusText>
      <StatusIcon>
        <svg width="18" height="19" viewBox="0 0 18 19">
          <circle cx="8" cy="3" r="2" fill="none" stroke="#555" />
          <path d="M1 6h14M6 6v5l-3 7M10 6v5l3 7M2 17L15 9" stroke="#555" fill="none" />
        </svg>
      </StatusIcon>
      <StatusText>Accessibility: Investigate</StatusText>
      <ViewBtns>
        <ViewBtn $on>
          <svg width="17" height="16" viewBox="0 0 17 16">
            <path d="M.5.5h16v15H.5zM6 .5v15M11 .5v15M.5 5.500h16M.5 10.500h16" fill="none" stroke="#555" />
          </svg>
        </ViewBtn>
        <ViewBtn>
          <svg width="18" height="17" viewBox="0 0 18 17">
            <rect x="1" y="1" width="16" height="15" fill="none" stroke="#555" strokeWidth="1.5" />
            <path d="M5.500 4.500h7v8h-7zM7 7h4M7 9.500h4" fill="none" stroke="#555" />
          </svg>
        </ViewBtn>
        <ViewBtn>
          <svg width="18" height="17" viewBox="0 0 18 17">
            <path d="M1 1h16v10H8V16H1zM8 1v6h4V1" fill="none" stroke="#555" strokeWidth="1.3" />
          </svg>
        </ViewBtn>
      </ViewBtns>
      <ZoomBar>
        <svg width="158" height="16" viewBox="0 0 158 16">
          <path d="M0 8h9M16 8h125M147 8h10M152 3v10" stroke="#555" strokeWidth="1" fill="none" />
          <rect x="76" y="1" width="6" height="14" fill="#444" />
        </svg>
        <ZoomLabel>100%</ZoomLabel>
      </ZoomBar>
    </StatusBar>

    <Watermark>
      <WatermarkAr dir="rtl">مستقل</WatermarkAr>
      <WatermarkEn>mostaql.com</WatermarkEn>
    </Watermark>
  </Page>
);

export default App;
